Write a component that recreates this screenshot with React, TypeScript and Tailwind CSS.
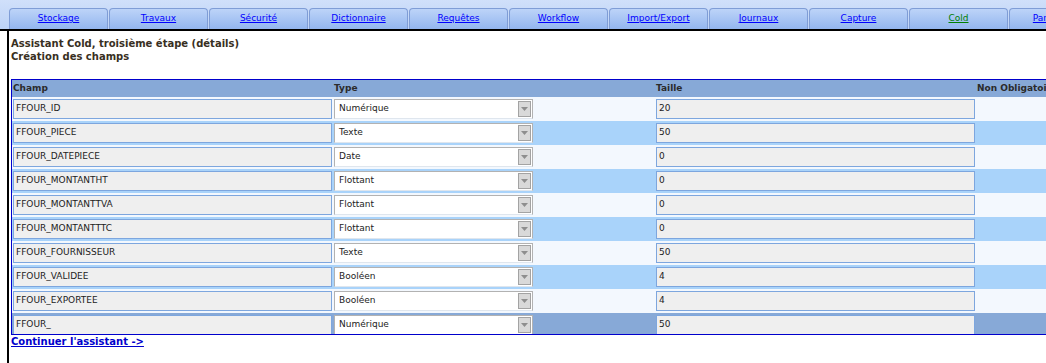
import React from "react";

const tabs = [
  "Stockage",
  "Travaux",
  "Sécurité",
  "Dictionnaire",
  "Requêtes",
  "Workflow",
  "Import/Export",
  "Journaux",
  "Capture",
  "Cold",
  "Paramètres",
];

const champs = [
  ["FFOUR_ID", "Numérique", "20"],
  ["FFOUR_PIECE", "Texte", "50"],
  ["FFOUR_DATEPIECE", "Date", "0"],
  ["FFOUR_MONTANTHT", "Flottant", "0"],
  ["FFOUR_MONTANTTVA", "Flottant", "0"],
  ["FFOUR_MONTANTTTC", "Flottant", "0"],
  ["FFOUR_FOURNISSEUR", "Texte", "50"],
  ["FFOUR_VALIDEE", "Booléen", "4"],
  ["FFOUR_EXPORTEE", "Booléen", "4"],
  ["FFOUR_", "Numérique", "50"],
];

function TypeSelect({ value }: { value: string }) {
  return (
    <div className="w-[199px] h-[20px] border border-[#b2b2b2] border-b-[#dfe6ee] bg-white flex items-center">
      <span className="flex-1 pl-[4px] text-[9px] text-[#222]">{value}</span>
      <div className="w-[13px] h-[16px] mr-[1px] bg-[#d9d9d9] border border-[#a3a3a3] flex items-center justify-center">
        <svg width="7" height="4" viewBox="0 0 7 4">
          <path d="M0 0 L7 0 L3.5 4 Z" fill="#8e8e8e" />
        </svg>
      </div>
    </div>
  );
}

export default function App() {
  return (
    <div className="w-[1046px] h-[363px] overflow-hidden bg-white font-['DejaVu_Sans',sans-serif]">
      {/* onglets */}
      <div className="h-[31px] border-b-2 border-black bg-gradient-to-b from-[#d0e0fa] to-[#bcd2f6] flex items-end pl-[9px] gap-[1px] whitespace-nowrap">
        {tabs.map((t) => (
          <div
            key={t}
            className="shrink-0 w-[99px] h-[21px] rounded-t-[4px] border border-b-0 border-[#7f9dd6] bg-gradient-to-b from-[#bdd4f8] to-[#93b6ef] flex items-center justify-center"
          >
            <a
              href="#"
              className={`text-[9px] underline ${t === "Cold" ? "text-[#008000]" : "text-[#0000ff]"}`}
            >
              {t}
            </a>
          </div>
        ))}
      </div>

      <div className="ml-[7px] h-[332px] border-l-2 border-black pl-[2px]">
        <div className="pt-[6px] text-[10px] leading-[13px] font-bold text-[#382f22]">
          <p>Assistant Cold, troisième étape (détails)</p>
          <p>Création des champs</p>
        </div>

        <div className="mt-[16px] w-[1100px] border-t border-l border-b border-[#0000cc]">
          <div className="h-[17px] bg-[#87a9d7] flex items-center text-[9px] font-bold text-[#2b2b2b]">
            <div className="w-[322px] pl-[1px]">Champ</div>
            <div className="w-[322px]">Type</div>
            <div className="w-[321px]">Taille</div>
            <div className="flex-1">Non Obligatoire</div>
          </div>
          {champs.map(([nom, type, taille], i) => {
            const last = i === champs.length - 1;
            const bg = last ? "bg-[#87a9d7]" : i % 2 === 0 ? "bg-[#f3f8fe]" : "bg-[#a9d3fa]";
            return (
              <div
                key={nom}
                className={`flex overflow-hidden ${bg} ${last ? "h-[21px] items-start pt-[2px]" : "h-[24px] items-center"}`}
              >
                <div className="w-[322px] pl-[1px] shrink-0">
                  <div className="w-[319px] h-[20px] border border-[#7da6de] bg-[#efefef] flex items-center pl-[2px] text-[9px] text-[#222]">
                    {nom}
                  </div>
                </div>
                <div className="w-[322px] shrink-0">
                  <TypeSelect value={type} />
                </div>
                <div className="w-[321px] shrink-0">
                  <div className="w-[319px] h-[20px] border border-[#7da6de] bg-[#efefef] flex items-center pl-[2px] text-[9px] text-[#222]">
                    {taille}
                  </div>
                </div>
                <div className="flex-1" />
              </div>
            );
          })}
        </div>

        <a href="#" className="block text-[10px] leading-[13px] font-bold text-[#0000cc] underline">
          Continuer l'assistant -&gt;
        </a>
      </div>
    </div>
  );
}
